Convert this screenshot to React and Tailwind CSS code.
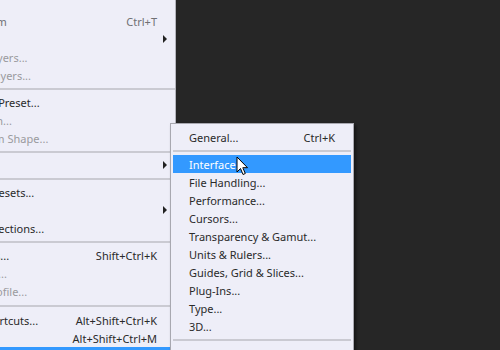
import React from "react";

const leftItems = [
  { label: "Free Transform", shortcut: "Ctrl+T", tone: "dim" },
  { label: "Transform", arrow: true },
  { label: "Auto-Align Layers...", tone: "off" },
  { label: "Auto-Blend Layers...", tone: "off" },
  { sep: true },
  { label: "Define Brush Preset..." },
  { label: "Define Pattern...", tone: "off" },
  { label: "Define Custom Shape...", tone: "off" },
  { sep: true },
  { label: "Purge", arrow: true },
  { sep: true },
  { label: "Adobe PDF Presets..." },
  { label: "Presets", arrow: true },
  { label: "Remote Connections..." },
  { sep: true },
  { label: "Color Settings...", shortcut: "Shift+Ctrl+K" },
  { label: "Assign Profile...", tone: "off" },
  { label: "Convert to Profile...", tone: "off" },
  { sep: true, tall: true },
  { label: "Keyboard Shortcuts...", shortcut: "Alt+Shift+Ctrl+K" },
  { label: "Menus...", shortcut: "Alt+Shift+Ctrl+M" },
  { label: "Preferences", arrow: true, active: true },
];

const prefItems = [
  { label: "General...", shortcut: "Ctrl+K" },
  { sep: true },
  { label: "Interface...", active: true },
  { label: "File Handling..." },
  { label: "Performance..." },
  { label: "Cursors..." },
  { label: "Transparency & Gamut..." },
  { label: "Units & Rulers..." },
  { label: "Guides, Grid & Slices..." },
  { label: "Plug-Ins..." },
  { label: "Type..." },
  { label: "3D..." },
  { sep: true },
];

const toneClass = (item) => {
  if (item.active) return "text-white";
  if (item.tone === "off") return "text-[#9a9a9e]";
  if (item.tone === "dim") return "text-[#707074]";
  return "text-[#2a2a2a]";
};

const Separator = ({ tall }) => (
  <div className={`${tall ? "h-[11px]" : "h-[9px]"} flex items-center`}>
    <div className="w-full h-[2px] bg-[#cacad2]" />
  </div>
);

const Cursor = () => (
  <svg
    width="13"
    height="20"
    viewBox="0 0 13 20"
    className="absolute left-[236px] top-[156px]"
  >
    <path
      d="M1 1 L1 16 L4.5 12.5 L7 18.5 L9.3 17.5 L6.8 11.7 L11.5 11.7 Z"
      fill="#ffffff"
      stroke="#000000"
      strokeWidth="1"
      strokeLinejoin="round"
    />
  </svg>
);

const App = () => {
  return (
    <div
      className="relative w-[500px] h-[350px] overflow-hidden bg-[#262626] flex"
      style={{ fontFamily: '"Noto Sans", "Open Sans", sans-serif' }}
    >
      {/* Edit menu (scrolled off to the left) */}
      <div className="w-[176px] h-full bg-[#eeeef8] border-r border-[#b4b4bc] overflow-hidden pt-[12px] shrink-0">
        {leftItems.map((item, i) =>
          item.sep ? (
            <Separator key={i} tall={item.tall} />
          ) : (
            <div
              key={i}
              className={`h-[18px] flex items-center text-[11px] leading-none ${
                item.active ? "bg-[#3399ff] mr-[4px]" : ""
              } ${toneClass(item)}`}
            >
              <span className="ml-[-72px] whitespace-nowrap flex-1">
                {item.label}
              </span>
              {item.shortcut && (
                <span className="whitespace-nowrap">{item.shortcut}</span>
              )}
              <span className="w-[18px] shrink-0 flex items-center pl-[6px]">
                {item.arrow && !item.active && (
                  <span className="w-0 h-0 border-y-[4px] border-y-transparent border-l-[4px] border-l-[#222]" />
                )}
              </span>
            </div>
          )
        )}
      </div>

      {/* Preferences submenu */}
      <div className="absolute left-[170px] top-[123px] w-[184px] h-[240px] bg-[#eeeef8] border border-[#a8a8b0] shadow-[2px_2px_3px_rgba(0,0,0,0.5)] px-[2px] pt-[4px]">
        {prefItems.map((item, i) =>
          item.sep ? (
            <Separator key={i} />
          ) : (
            <div
              key={i}
              className={`h-[18px] flex items-center text-[11px] leading-none pl-[16px] pr-[16px] ${
                item.active ? "bg-[#3399ff]" : ""
              } ${toneClass(item)}`}
            >
              <span className="flex-1 whitespace-nowrap">{item.label}</span>
              {item.shortcut && (
                <span className="whitespace-nowrap">{item.shortcut}</span>
              )}
            </div>
          )
        )}
      </div>

      <Cursor />
    </div>
  );
};

export default App;
